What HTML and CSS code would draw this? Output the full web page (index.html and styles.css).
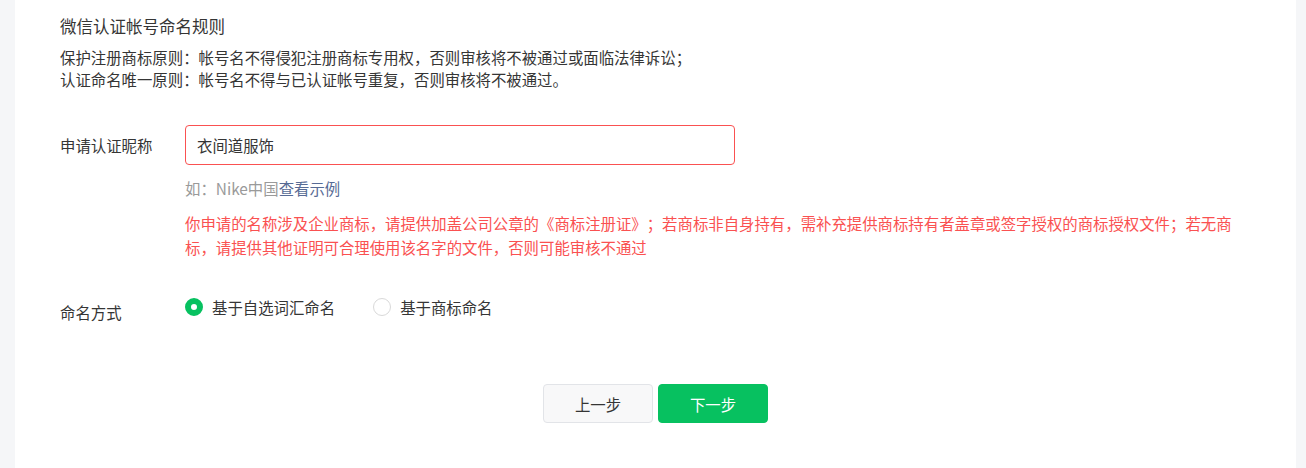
FILE: index.html
```html
<!DOCTYPE html>
<html lang="zh-CN">
<head>
<meta charset="utf-8">
<title>微信认证帐号命名</title>
<link rel="stylesheet" href="styles.css">
</head>
<body>
<div class="page">
  <div class="panel">
    <h3 class="rules-title">微信认证帐号命名规则</h3>
    <div class="rules">
      <p>保护注册商标原则：帐号名不得侵犯注册商标专用权，否则审核将不被通过或面临法律诉讼；</p>
      <p>认证命名唯一原则：帐号名不得与已认证帐号重复，否则审核将不被通过。</p>
    </div>

    <div class="form-row row-name">
      <label class="form-label">申请认证昵称</label>
      <div class="form-control">
        <div class="input">衣间道服饰</div>
        <p class="hint">如：Nike中国<a class="link">查看示例</a></p>
        <p class="error">你申请的名称涉及企业商标，请提供加盖公司公章的《商标注册证》；若商标非自身持有，需补充提供商标持有者盖章或签字授权的商标授权文件；若无商标，请提供其他证明可合理使用该名字的文件，否则可能审核不通过</p>
      </div>
    </div>

    <div class="form-row row-mode">
      <label class="form-label label-mode">命名方式</label>
      <div class="form-control radios">
        <span class="radio checked"><i class="dot"></i>基于自选词汇命名</span>
        <span class="radio"><i class="dot"></i>基于商标命名</span>
      </div>
    </div>

    <div class="actions">
      <button class="btn btn-default">上一步</button>
      <button class="btn btn-primary">下一步</button>
    </div>
  </div>
</div>
</body>
</html>
```

FILE: styles.css
```css
* { box-sizing: border-box; }
html, body { margin: 0; padding: 0; }
body {
  font-family: "Noto Sans CJK SC", "Noto Sans", sans-serif;
  font-size: 15.4px;
  color: #353535;
  background: #f5f6f8;
  text-spacing-trim: space-all;
}
.page {
  display: flex;
  min-height: 468px;
  padding: 0 10px 0 15px;
  background: #f5f6f8;
}
.panel {
  flex: 1;
  background: #fff;
  padding: 14px 45px 0 45px;
}
.rules-title {
  margin: 0;
  font-size: 16.5px;
  font-weight: normal;
  line-height: 24px;
  color: #353535;
}
.rules { margin-top: 8px; }
.rules p { margin: 0; line-height: 22px; }

.form-row { display: flex; align-items: flex-start; }
.form-label {
  width: 125px;
  flex: none;
  line-height: 40px;
}
.row-name { margin-top: 35px; }
.input {
  width: 550px;
  height: 40px;
  border: 1px solid #fa5151;
  border-radius: 4px;
  padding: 0 11px;
  line-height: 38px;
}
.hint {
  margin: 12px 0 0;
  line-height: 22px;
  color: #9a9a9a;
}
.link { color: #576b95; text-decoration: none; }
.error {
  margin: 12px 0 0;
  max-width: 1055px;
  line-height: 24px;
  color: #fa5151;
}
.row-mode { margin-top: 37px; }
.label-mode { line-height: 22px; margin-top: 5px; }
.radios { display: flex; gap: 38px; line-height: 22px; }
.radio { display: flex; align-items: center; gap: 9px; }
.dot {
  width: 18px;
  height: 18px;
  border-radius: 50%;
  border: 1px solid #d9d9d9;
  background: #fff;
  display: block;
}
.radio.checked .dot {
  border: 6px solid #07c160;
  background: #fff;
}
.actions {
  display: flex;
  justify-content: center;
  gap: 5px;
  margin-top: 61px;
}
.btn {
  width: 110px;
  height: 39px;
  border-radius: 4px;
  font-family: inherit;
  font-size: 15.4px;
  cursor: pointer;
}
.btn-default {
  background: #f8f8f9;
  border: 1px solid #e2e4e8;
  color: #353535;
}
.btn-primary {
  background: #07c160;
  border: 1px solid #07c160;
  color: #fff;
}
```
